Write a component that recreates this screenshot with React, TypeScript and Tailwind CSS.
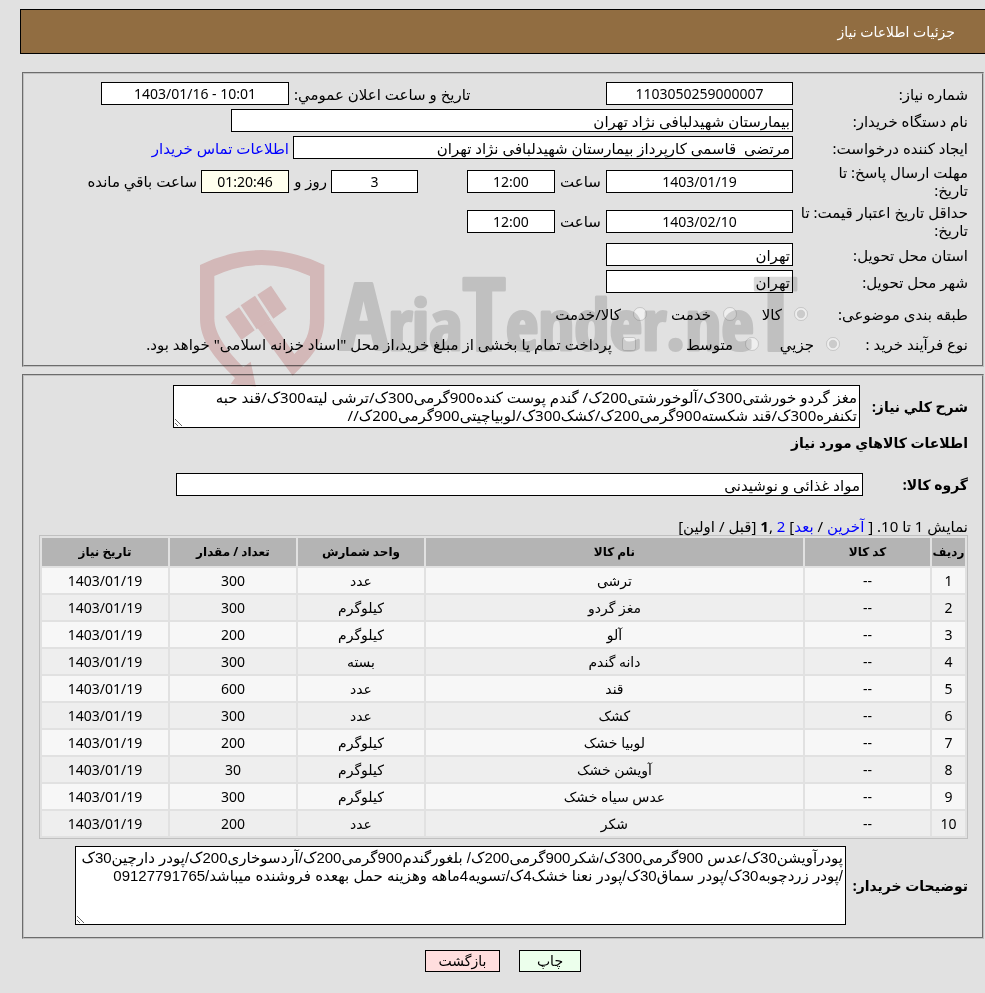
import type { ReactNode } from "react"
import clsx from "clsx"

interface Item {
  id: number
  code: string
  name: string
  unit: string
  amount: string
  date: string
}

const items: Item[] = [
  { id: 1, code: "--", name: "ترشی", unit: "عدد", amount: "300", date: "1403/01/19" },
  { id: 2, code: "--", name: "مغز گردو", unit: "کیلوگرم", amount: "300", date: "1403/01/19" },
  { id: 3, code: "--", name: "آلو", unit: "کیلوگرم", amount: "200", date: "1403/01/19" },
  { id: 4, code: "--", name: "دانه گندم", unit: "بسته", amount: "300", date: "1403/01/19" },
  { id: 5, code: "--", name: "قند", unit: "عدد", amount: "600", date: "1403/01/19" },
  { id: 6, code: "--", name: "کشک", unit: "عدد", amount: "300", date: "1403/01/19" },
  { id: 7, code: "--", name: "لوبیا خشک", unit: "کیلوگرم", amount: "200", date: "1403/01/19" },
  { id: 8, code: "--", name: "آویشن خشک", unit: "کیلوگرم", amount: "30", date: "1403/01/19" },
  { id: 9, code: "--", name: "عدس سیاه خشک", unit: "کیلوگرم", amount: "300", date: "1403/01/19" },
  { id: 10, code: "--", name: "شکر", unit: "عدد", amount: "200", date: "1403/01/19" },
]

const summary =
  "مغز گردو خورشتی300ک/آلوخورشتی200ک/ گندم پوست کنده900گرمی300ک/ترشی لیته300ک/قند حبه\nتکنفره300ک/قند شکسته900گرمی200ک/کشک300ک/لوبیاچیتی900گرمی200ک//"

const buyerNotes =
  "پودرآویشن30ک/عدس 900گرمی300ک/شکر900گرمی200ک/ بلغورگندم900گرمی200ک/آردسوخاری200ک/پودر دارچین30ک\n/پودر زردچوبه30ک/پودر سماق30ک/پودر نعنا خشک4ک/تسویه4ماهه وهزینه حمل بهعده فروشنده میباشد/09127791765"

interface FieldProps {
  id: string
  value: string
  numeric?: boolean
  className?: string
}

function Field({ id, value, numeric = false, className }: FieldProps) {
  return (
    <input
      id={id}
      type="text"
      readOnly
      defaultValue={value}
      className={clsx("h-[23px] border border-black px-0.5", numeric && "text-center text-[14px]", className)}
    />
  )
}

interface RowProps {
  label: string
  htmlFor?: string
  className?: string
  labelClassName?: string
  children: ReactNode
}

function Row({ label, htmlFor, className, labelClassName, children }: RowProps) {
  return (
    <div className={clsx("flex items-center", className)}>
      <label htmlFor={htmlFor} className={clsx("w-[175px] shrink-0", labelClassName)}>
        {label}
      </label>
      {children}
    </div>
  )
}

interface ChoiceProps {
  label: string
  name: string
  type?: "radio" | "checkbox"
  checked?: boolean
  className?: string
}

function Choice({ label, name, type = "radio", checked = false, className }: ChoiceProps) {
  return (
    <label className={clsx("flex shrink-0 items-center whitespace-nowrap", className)}>
      <input type={type} name={name} disabled defaultChecked={checked} className="size-[14px] shrink-0" />
      {label}
    </label>
  )
}

function Watermark() {
  return (
    <svg
      aria-hidden="true"
      viewBox="0 0 604 138"
      className="pointer-events-none absolute left-[200px] top-[250px] h-[138px] w-[604px] mix-blend-multiply"
    >
      <g transform="scale(.3333) translate(-600 -60)" fill="#af1919" opacity="0.2">
        <path d="M600 105Q785 15 973 105V265C973 330 950 368 878 437L770 290L812 270L883 372C918 338 930 310 930 265V138Q785 72 643 138V265C643 310 680 362 730 412L752 395L768 470L692 462L705 444C640 382 600 330 600 265Z" />
        <path d="M676 260L717 232L764 301L724 330Z" />
        <path d="M722 226L765 197L812 269L770 298Z" />
        <path d="M772 194L813 167L860 237L820 266Z" />
      </g>
      <text
        x="139"
        y="100"
        fill="#000"
        stroke="#000"
        strokeWidth="3"
        strokeLinejoin="round"
        opacity="0.145"
        direction="ltr"
        className="font-['Open_Sans_Condensed','Roboto_Condensed',sans-serif] text-[71px] font-bold"
      >
        <tspan className="text-[92px]">A</tspan>ria<tspan className="text-[100px]">T</tspan>ender.ne
        <tspan className="text-[100px]">T</tspan>
      </text>
    </svg>
  )
}

export default function App() {
  return (
    <div
      dir="rtl"
      className="relative min-h-screen bg-[#e1e1e1] pt-[9px] pl-5 font-['Noto_Sans','DejaVu_Sans',sans-serif] text-[15px] leading-[18px] text-black"
    >
      <header className="flex h-[45px] items-center border-y border-l border-black bg-[#916d41] pr-[30px] text-[14px] text-white">
        <h1>جزئیات اطلاعات نیاز</h1>
      </header>

      <main className="mt-[18px] mr-px ml-0.5">
        <fieldset className="border-2 border-[#c0c0c0] px-[14px] pt-2 pb-[7px] [border-style:groove] [&_input]:bg-white">
          <div className="flex flex-col gap-1">
            <Row label="شماره نیاز:" htmlFor="number">
              <Field id="number" value="1103050259000007" numeric className="w-[187px]" />
              <label htmlFor="announced" className="w-[317px] pl-[5px] text-left">
                تاریخ و ساعت اعلان عمومي:
              </label>
              <Field id="announced" value="10:01 - 1403/01/16" numeric className="w-[188px]" />
            </Row>
            <Row label="نام دستگاه خریدار:" htmlFor="buyer">
              <Field id="buyer" value="بیمارستان شهیدلبافی نژاد تهران" className="w-[562px]" />
            </Row>
            <Row label="ایجاد کننده درخواست:" htmlFor="creator">
              <Field id="creator" value="مرتضی  قاسمی کارپرداز بیمارستان شهیدلبافی نژاد تهران" className="w-[500px]" />
              <a href="#contact" className="pr-1 text-[#0000ff]">
                اطلاعات تماس خریدار
              </a>
            </Row>
            <Row label="مهلت ارسال پاسخ: تا تاریخ:" htmlFor="deadline" className="h-9" labelClassName="pl-7">
              <Field id="deadline" value="1403/01/19" numeric className="w-[187px]" />
              <label htmlFor="deadline-time" className="w-[51px] text-center">
                ساعت
              </label>
              <Field id="deadline-time" value="12:00" numeric className="w-[88px]" />
              <Field id="days-left" value="3" numeric className="mr-[49px] w-[87px]" />
              <label htmlFor="days-left" className="w-[42px] pr-1">
                روز و
              </label>
              <Field id="time-left" value="01:20:46" numeric className="w-[88px] bg-[#ffffee]!" />
              <label htmlFor="time-left" className="pr-1">
                ساعت باقي مانده
              </label>
            </Row>
            <Row label="حداقل تاریخ اعتبار قیمت: تا تاریخ:" htmlFor="validity" className="h-9">
              <Field id="validity" value="1403/02/10" numeric className="w-[187px]" />
              <label htmlFor="validity-time" className="w-[51px] text-center">
                ساعت
              </label>
              <Field id="validity-time" value="12:00" numeric className="w-[88px]" />
            </Row>
            <Row label="استان محل تحویل:" htmlFor="province">
              <Field id="province" value="تهران" className="w-[187px]" />
            </Row>
            <Row label="شهر محل تحویل:" htmlFor="city">
              <Field id="city" value="تهران" className="w-[187px]" />
            </Row>
          </div>

          <div className="mt-[5px] flex h-[31px] items-center">
            <span className="w-[160px] shrink-0">طبقه بندی موضوعی:</span>
            <Choice label="کالا" name="category" checked className="w-[71px] gap-3" />
            <Choice label="خدمت" name="category" className="w-[90px] gap-3" />
            <Choice label="کالا/خدمت" name="category" className="gap-3" />
          </div>
          <div className="flex h-[29px] items-center">
            <span className="w-[128px] shrink-0">نوع فرآیند خرید :</span>
            <Choice label="جزیي" name="process" checked className="w-[81px] gap-3" />
            <Choice label="متوسط" name="process" className="w-[123px] gap-3" />
            <Choice
              label={'پرداخت تمام یا بخشی از مبلغ خرید،از محل "اسناد خزانه اسلامی" خواهد بود.'}
              name="treasury"
              type="checkbox"
              className="gap-2.5"
            />
          </div>
        </fieldset>

        <fieldset className="mt-[7px] border-2 border-[#c0c0c0] px-[14px] pt-[9px] pb-3 [border-style:groove]">
          <div className="flex items-center">
            <label htmlFor="summary" className="w-[108px] shrink-0 text-[14px] font-bold">
              شرح کلي نیاز:
            </label>
            <textarea
              id="summary"
              readOnly
              defaultValue={summary}
              className="h-[43px] w-[687px] border border-black bg-white px-0.5 pt-0.5"
            />
          </div>
          <h2 className="mt-1.5 text-[14px] font-bold">اطلاعات کالاهاي مورد نیاز</h2>
          <div className="mt-[21px] flex items-center">
            <label htmlFor="group" className="w-[105px] shrink-0 text-[14px] font-bold">
              گروه کالا:
            </label>
            <Field id="group" value="مواد غذائی و نوشیدنی" className="w-[687px] bg-white" />
          </div>

          <nav className="mt-[21px]">
            نمایش 1 تا 10. [{" "}
            <a href="#last" className="text-[#0000ff]">
              آخرین
            </a>{" "}
            /{" "}
            <a href="#next" className="text-[#0000ff]">
              بعد
            </a>
            ]{" "}
            <a href="#page-2" className="text-[#0000ff]">
              2
            </a>{" "}
            ,<b>1</b> [قبل / اولین]
          </nav>

          <div className="pl-px">
            <table className="w-full table-fixed border-separate border-spacing-0.5 border border-[#c0c0c0] text-center text-[14px]">
              <thead className="bg-[#b4b4b4] text-[12px]">
                <tr className="h-7">
                  <th className="w-[33px]">ردیف</th>
                  <th className="w-[13.7%]">کد کالا</th>
                  <th>نام کالا</th>
                  <th className="w-[13.8%]">واحد شمارش</th>
                  <th className="w-[13.8%]">تعداد / مقدار</th>
                  <th className="w-[13.8%]">تاریخ نیاز</th>
                </tr>
              </thead>
              <tbody>
                {items.map((item) => (
                  <tr key={item.id} className="h-[25px] odd:bg-[#f7f7f7] even:bg-[#eeeeee]">
                    <td>{item.id}</td>
                    <td>{item.code}</td>
                    <td>{item.name}</td>
                    <td>{item.unit}</td>
                    <td>{item.amount}</td>
                    <td>{item.date}</td>
                  </tr>
                ))}
              </tbody>
            </table>
          </div>

          <div className="mt-[7px] flex items-center">
            <label htmlFor="notes" className="w-[122px] shrink-0 text-[14px] font-bold">
              توضیحات خریدار:
            </label>
            <textarea
              id="notes"
              readOnly
              defaultValue={buyerNotes}
              className="h-[79px] w-[771px] border border-black bg-white px-0.5 pt-0.5 font-['Liberation_Sans','DejaVu_Sans',sans-serif]"
            />
          </div>
        </fieldset>

        <div className="mt-[11px] flex justify-center gap-[19px] text-[14px]">
          <button type="button" className="h-[22px] w-[62px] border border-black bg-[#ecffec]">
            چاپ
          </button>
          <button type="button" className="h-[22px] w-[75px] border border-black bg-[#ffdede]">
            بازگشت
          </button>
        </div>
      </main>

      <Watermark />
    </div>
  )
}
